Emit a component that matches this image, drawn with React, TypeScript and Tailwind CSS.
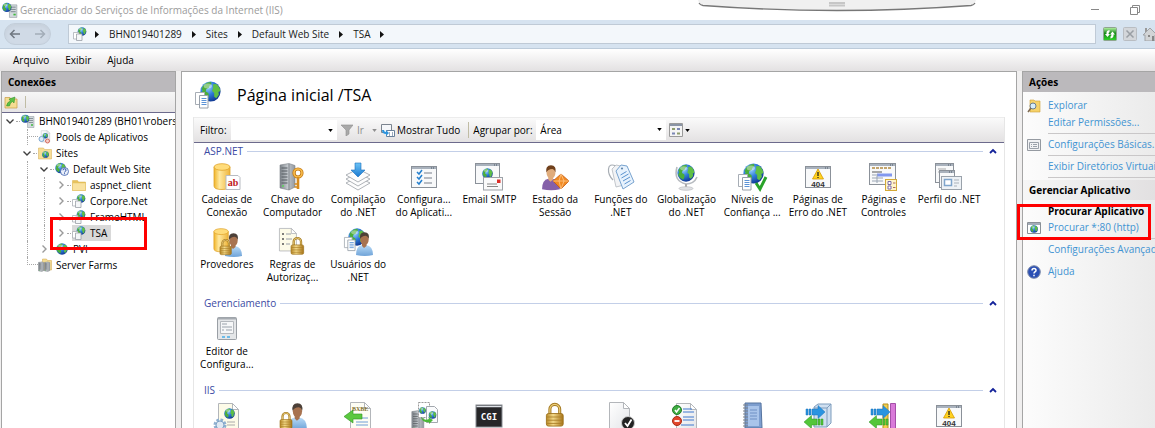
import type { ReactNode } from 'react'

type P = { x?: number; y?: number; s?: number }

const at = ({ x = 0, y = 0, s = 1 }: P) => `translate(${x} ${y}) scale(${s})`

/* shared gradients for every icon on the page */
function Gradients() {
  return (
    <svg className="absolute h-0 w-0" aria-hidden="true">
      <defs>
        <radialGradient id="sea" cx="0.35" cy="0.3" r="0.8">
          <stop offset="0" stopColor="#9fd8ff" />
          <stop offset="0.45" stopColor="#2f7ddb" />
          <stop offset="1" stopColor="#0b2c86" />
        </radialGradient>
        <linearGradient id="gold">
          <stop offset="0" stopColor="#f0b429" />
          <stop offset="0.35" stopColor="#ffe9a0" />
          <stop offset="1" stopColor="#eeb43a" />
        </linearGradient>
        <linearGradient id="brass">
          <stop offset="0" stopColor="#b98a2a" />
          <stop offset="0.4" stopColor="#f3d988" />
          <stop offset="1" stopColor="#a87418" />
        </linearGradient>
        <linearGradient id="steel">
          <stop offset="0" stopColor="#7d8389" />
          <stop offset="0.5" stopColor="#c3c8cd" />
          <stop offset="1" stopColor="#94999f" />
        </linearGradient>
        <linearGradient id="paper" x1="0" y1="0" x2="1" y2="1">
          <stop offset="0" stopColor="#ffffff" />
          <stop offset="1" stopColor="#e3e5e8" />
        </linearGradient>
        <linearGradient id="skyArrow" x1="0" y1="0" x2="0" y2="1">
          <stop offset="0" stopColor="#6cc4f7" />
          <stop offset="1" stopColor="#1a78cf" />
        </linearGradient>
        <linearGradient id="shirt" x1="0" y1="0" x2="0" y2="1">
          <stop offset="0" stopColor="#b9dbf7" />
          <stop offset="1" stopColor="#6fa3d8" />
        </linearGradient>
        <linearGradient id="refresh" x1="0" y1="0" x2="0" y2="1">
          <stop offset="0" stopColor="#b9f5a8" />
          <stop offset="0.45" stopColor="#17881a" />
          <stop offset="1" stopColor="#2fd62a" />
        </linearGradient>
      </defs>
    </svg>
  )
}

function Globe(p: P) {
  return (
    <g transform={at(p)}>
      <circle cx="10" cy="10" r="9.6" fill="url(#sea)" />
      <path d="M3 4.500Q6 1 10.500.9L11 3 9 4.500 8.500 6.500 6 7.500 5.500 10 8 11.500 8.500 14 7 17.500Q3 16 1.200 12L2.500 9 1.500 7.500Z" fill="#4cae3a" />
      <path d="M12.500 3.200L15.500 2.800Q19 5.500 19.400 9.500L17.500 10.500 18 13 15.500 16.500 13.500 15 13.500 11.500 11.500 9.500 12.500 6.500Z" fill="#5fbf45" />
      <ellipse cx="7.500" cy="4.800" rx="4" ry="2.400" fill="#fff" opacity="0.4" />
    </g>
  )
}

function Docs(p: P) {
  return (
    <g transform={at(p)}>
      <path d="M.5.5h9v12h-9z" fill="#fff" stroke="#a7adb5" />
      <path d="M4.500 3.500h8.500v12.500h-8.500z" fill="#fff" stroke="#98a0aa" />
      <path d="M6.500 6.500h5M6.500 8.500h5M6.500 10.500h5M6.500 12.500h5" stroke="#5c93d6" />
    </g>
  )
}

function Lock(p: P) {
  return (
    <g transform={at(p)}>
      <path d="M3.500 8V4.500a3.500 3.500 0 0 1 7 0V8" fill="none" stroke="#a57a22" strokeWidth="2.200" />
      <path d="M3.500 8V4.500a3.500 3.500 0 0 1 7 0V8" fill="none" stroke="#ecd07c" strokeWidth="0.8" />
      <rect x="1" y="7.500" width="12" height="9" rx="1.500" fill="url(#brass)" stroke="#9b6f17" strokeWidth="0.6" />
      <path d="M1.500 10h11M1.500 12.300h11M1.500 14.600h11" stroke="#a97e26" strokeWidth="0.6" />
    </g>
  )
}

function Person({ hair = '#4c4038', skin = '#a87350', shirt = 'url(#shirt)', ...p }: P & { hair?: string; skin?: string; shirt?: string }) {
  return (
    <g transform={at(p)}>
      <path d="M1 24q0-9 6-10h4q7 1 7 10-8 2-17 0z" fill={shirt} />
      <path d="M7 12h4.500v3L9 17l-2-2z" fill={skin} />
      <ellipse cx="9.500" cy="8.500" rx="4.200" ry="5.500" fill={skin} />
      <path d="M5 8Q4 1.500 9.500 1.200 15 1.500 13.800 8q-.8-3-3-3.300Q6.500 5 5 8z" fill={hair} />
    </g>
  )
}

function Cylinder(p: P) {
  return (
    <g transform={at(p)}>
      <path d="M1 4v19q0 3.500 8 3.500t8-3.500V4z" fill="url(#gold)" stroke="#e0a32a" strokeWidth="0.8" />
      <ellipse cx="9" cy="4" rx="8" ry="3.300" fill="#ffdc7a" stroke="#e0a32a" strokeWidth="0.8" />
    </g>
  )
}

function Sheet({ fill = 'url(#paper)', ...p }: P & { fill?: string }) {
  return (
    <g transform={at(p)}>
      <path d="M.5.5h14l6 6v20.500H.5z" fill={fill} stroke="#b3b6ba" />
      <path d="M14.500.5v6h6z" fill="#fff" stroke="#b3b6ba" />
    </g>
  )
}

function Tower(p: P) {
  return (
    <g transform={at(p)}>
      <path d="M1 2l9-1.500 6 2V24l-6 3-9-2z" fill="url(#steel)" stroke="#7b8086" strokeWidth="0.6" />
      <path d="M10 1v26" stroke="#6d7278" strokeWidth="0.7" />
      <path d="M2.500 5h6M2.500 8h6M2.500 11h6M2.500 14h6M2.500 17h6M2.500 20h6" stroke="#555a60" />
      <circle cx="4" cy="23" r="1" fill="#5cd65c" />
    </g>
  )
}

function Frame({ w = 26, h = 22, ...p }: P & { w?: number; h?: number }) {
  return (
    <g transform={at(p)}>
      <rect x="0.500" y="0.500" width={w - 1} height={h - 1} fill="#f8f9fa" stroke="#8b9199" />
      <path d={`M1 2h${w - 2}`} stroke="#a9b2bd" strokeWidth="2" />
      <path d={`M${w - 6} 2h1M${w - 4} 2h1`} stroke="#4d5866" />
    </g>
  )
}

function Arrows() {
  return (
    <g>
      <path d="M2 7h2v6H2zM5 7h2v6H5zM8 7h6V3.500l7 6.500-7 6.500V13H8z" fill="#2a94e0" stroke="#1b72ba" strokeWidth="0.5" />
      <path d="M19 17h-2v6h2zM16 17h-2v6h2zM13 17H7.500v-3.500L0 20l7.500 6.500V23H13z" fill="#54c63a" stroke="#2f9322" strokeWidth="0.5" />
    </g>
  )
}

function Error404() {
  return (
    <>
      <Frame x={1} y={3} w={26} h={22} />
      <path d="M14 6l5.500 10h-11z" fill="#ffd21f" stroke="#d69a00" strokeWidth="0.8" />
      <path d="M14 9v4M14 14v1" stroke="#222" strokeWidth="1.300" />
      <text x="14" y="23.500" textAnchor="middle" fontSize="8" fontFamily="Liberation Sans, sans-serif" fontWeight="700" fill="#333">404</text>
    </>
  )
}

const art: Record<string, ReactNode> = {
  strings: (
    <>
      <Cylinder />
      <path d="M13 12.500h12l2 2v12H13z" fill="#fff" stroke="#b8bcc2" />
      <text x="20" y="22.500" textAnchor="middle" fontSize="10" fontWeight="700" fontFamily="Liberation Serif, serif" fill="#c01818">ab</text>
    </>
  ),
  key: (
    <>
      <Tower x={1} />
      <circle cx="20" cy="10" r="4" fill="none" stroke="#c57b16" strokeWidth="3.200" />
      <circle cx="20" cy="10" r="4" fill="none" stroke="#f8bd4d" strokeWidth="1.600" />
      <path d="M20 14v12" stroke="#d68b1e" strokeWidth="2.600" />
      <path d="M20 21h-3.500M20 24h-3.500" stroke="#d68b1e" strokeWidth="1.500" />
    </>
  ),
  compile: (
    <>
      {[20, 16, 12].map((y) => (
        <path key={y} d={`M2 ${y}l12-6 12 6-12 7z`} fill="#fdfdfd" stroke="#9ba0a6" strokeWidth="0.8" />
      ))}
      <path d="M11 0h6v7h4l-7 7-7-7h4z" fill="url(#skyArrow)" stroke="#1b6fbe" strokeWidth="0.6" />
    </>
  ),
  settings: (
    <>
      <Frame x={1} y={3} w={26} h={22} />
      <path d="M7 9l2 2 3-4M7 14l2 2 3-4M7 19l2 2 3-4" fill="none" stroke="#247fce" strokeWidth="1.500" />
      <path d="M14 10h8M14 15h8M14 20h8" stroke="#777f8a" strokeWidth="1.200" />
    </>
  ),
  smtp: (
    <>
      <Frame x={0} y={0} w={25} h={21} />
      <Globe x={7} y={5} s={0.55} />
      <rect x="8.500" y="14.500" width="19" height="12.500" fill="#fafafa" stroke="#9da2a8" />
      <rect x="22" y="16.500" width="3.500" height="3.500" fill="#dc2d28" />
      <path d="M12 21h10M12 23.500h11" stroke="#888" />
    </>
  ),
  session: (
    <>
      <Person x={0} y={1} hair="#70401c" skin="#e0ac7c" shirt="#8560a8" s={1.050} />
      <path d="M20 11l8 7-8 8-8-8z" fill="#f18a23" stroke="#c6590d" strokeWidth="0.8" />
      <path d="M20 11l-2 7 2 8M12 18h16M20 11l3 7-3 8" fill="none" stroke="#ffd09a" strokeWidth="0.7" />
    </>
  ),
  functions: (
    <>
      <path d="M9 3Q2 0 1.500 6T6 17" fill="none" stroke="#a7adb4" strokeWidth="1.200" />
      <path d="M5 6l4-4 5 1 3 19-8 2z" fill="#f2f3f5" stroke="#b4b9bf" strokeWidth="0.8" />
      <path d="M9 8l5-6 6 1 7 16-11 7z" fill="#e7f2fd" stroke="#78a3cf" strokeWidth="1" />
      <path d="M13.500 12l6-3.500M14.500 15l7-4M16 18l7-4M17.500 21l6-3.500" stroke="#5b93cf" />
      <circle cx="15" cy="5.500" r="1.100" fill="#6287ab" />
    </>
  ),
  globe: (
    <>
      <path d="M5 4Q1 18 14 21q8 0 11-7" fill="none" stroke="#b7bbc0" strokeWidth="1.600" />
      <Globe x={5} y={1} s={0.9} />
      <path d="M14 21v4" stroke="#aaa" strokeWidth="2" />
      <ellipse cx="14" cy="25.500" rx="7" ry="1.800" fill="#dfe1e4" stroke="#b1b4b8" strokeWidth="0.6" />
    </>
  ),
  trust: (
    <>
      <Globe x={5} y={0} s={1.050} />
      <Docs x={0} y={11} />
      <path d="M18 20l4 6 6-12" fill="none" stroke="#29a329" strokeWidth="3" />
    </>
  ),
  error: <Error404 />,
  pages: (
    <>
      <Frame x={0} y={0} w={27} h={22} />
      <path d="M3 5h20" stroke="#c3a56e" strokeWidth="2" strokeDasharray="3 1" />
      <path d="M3 9h10" stroke="#555" />
      <path d="M8 12h15" stroke="#8197ee" strokeWidth="3" />
      <path d="M8 11v9M3 12h4M3 15h11M3 18h11" stroke="#9aa5b3" />
      <rect x="16.500" y="16.500" width="11" height="11" fill="#fff5c9" stroke="#d3a936" />
      <path d="M19 18.500h3v3h-3zM19 23h3v3h-3z" fill="#fff" stroke="#7a6aa8" />
      <path d="M24 20h2.500M24 24.500h2.500" stroke="#a66" />
    </>
  ),
  profile: (
    <>
      <Frame x={0} y={0} w={19} h={20} />
      <path d="M3 6h8M3 9h4" stroke="#aaa" />
      <Frame x={4} y={7} w={16} h={18} />
      <rect x="6.500" y="13.500" width="20" height="13" fill="#eef2f6" stroke="#9aa2ab" />
      <rect x="9.500" y="16.500" width="7" height="6" fill="#fff" stroke="#7fa5cc" strokeWidth="1.500" />
      <path d="M19 17h5M19 20h5M19 23h3" stroke="#aab2bb" />
    </>
  ),
  providers: (
    <>
      <Cylinder s={0.9} />
      <Person x={11} y={4} />
      <Lock x={6} y={11} s={0.95} />
    </>
  ),
  rules: (
    <>
      <Sheet x={1} y={0} s={0.85} fill="#fdfbe8" />
      <path d="M4 6h2M4 11h2M4 16h2" stroke="#555" strokeWidth="1.500" />
      <path d="M8 6h5M8 11h6M8 16h4" stroke="#9aa0a8" />
      <Lock x={12} y={9} s={1.050} />
    </>
  ),
  users: (
    <>
      <Globe x={4} y={0} s={0.9} />
      <Docs x={0} y={9} s={0.85} />
      <Person x={11} y={3} />
    </>
  ),
  editor: (
    <>
      <rect x="4.500" y="2.500" width="19" height="22" rx="1" fill="#e4e6e8" stroke="#9a9fa5" />
      <path d="M5 3.500h18" stroke="#a6abb1" strokeWidth="2" />
      <path d="M7.500 6.500h13v12h-13z" fill="#f6f7f8" stroke="#b4b8bd" />
      <path d="M9 9h5M9 12h10M9 15h2M13 15h6" stroke="#9aa2ab" />
      <path d="M9 22h3M14 22h3" stroke="#6cbbe8" strokeWidth="2" />
    </>
  ),
  handlers: (
    <>
      <Sheet x={5} y={1} fill="#fdfbe8" />
      <Globe x={11} y={6} s={0.55} />
      <path d="M14 20h8M14 23h8" stroke="#aaa" />
      <circle cx="7" cy="23" r="5" fill="#dfe9f3" stroke="#8fb0d0" strokeWidth="3" strokeDasharray="2.500 1.400" />
      <circle cx="7" cy="23" r="4" fill="#dfe9f3" stroke="#7fa3c6" />
    </>
  ),
  auth: (
    <>
      <Person x={9} y={0} s={1.100} />
      <Lock x={1} y={10} />
    </>
  ),
  output: (
    <>
      <Sheet x={6} y={0} fill="#fdfdf4" />
      <text x="8" y="8.500" fontSize="6" fontFamily="Liberation Serif, serif" fontWeight="700" fill="#806d2c">BXBE</text>
      <path d="M12 16h12M12 20h12M12 23h12" stroke="#6f9ed6" />
      <path d="M9 8v4h9v5H9v4l-9-6.500z" fill="#5bc83f" stroke="#2f9322" strokeWidth="0.600" />
    </>
  ),
  cache: (
    <>
      <Tower x={1} y={8} s={0.8} />
      <path d="M8.500.5h11v15h-11z" fill="#fff" stroke="#999" strokeDasharray="2 1" />
      <Globe x={9} y={5} s={0.35} />
      <path d="M16.500 4.500h8l3 3v13h-11z" fill="#fafbfc" stroke="#a3a8ae" />
      <Globe x={18.500} y={9} s={0.4} />
      <path d="M11 15q3 4 8 2l-1-2 5 3-4 4v-2q-7 1-8-5z" fill="#4cb838" />
    </>
  ),
  cgi: (
    <>
      <rect x="1" y="3" width="26" height="22" fill="#262628" stroke="#888c92" />
      <path d="M1.500 4.500h25" stroke="#dfe3e8" strokeWidth="1.500" />
      <text x="14" y="18" textAnchor="middle" fontSize="9" fontWeight="700" fontFamily="DejaVu Sans Mono, monospace" fill="#fff">CGI</text>
    </>
  ),
  ssl: <Lock x={4} y={1} s={1.400} />,
  document: (
    <>
      <Sheet x={2} y={0} />
      <circle cx="21" cy="21" r="6.500" fill="#222" stroke="#ccc" />
      <path d="M18 21l2.500 3 4-6.500" fill="none" stroke="#fff" strokeWidth="1.800" />
    </>
  ),
  filter: (
    <>
      <Sheet x={4} y={1} />
      <path d="M11 7h9M11 10h11M11 15h11M11 18h11M9 23h13" stroke="#3f78cf" />
      <circle cx="5" cy="8" r="4.500" fill="#3fae42" stroke="#257a2a" />
      <path d="M3 8l1.500 2L7.500 6" fill="none" stroke="#fff" strokeWidth="1.500" />
      <circle cx="5" cy="19" r="4.500" fill="#e2462b" stroke="#a92c17" />
      <path d="M2.500 19h5" stroke="#fff" strokeWidth="1.800" />
    </>
  ),
  logs: (
    <>
      <path d="M7 1h16l1 25H7z" fill="#7d9ecf" stroke="#56749f" />
      <path d="M10 4h11v20H10z" fill="#a9c4ea" />
      <path d="M12 8h7M12 11h7M12 14h7M12 17h7" stroke="#6f90c4" />
      <path d="M5 3h5M5 6h5M5 9h5M5 12h5M5 15h5M5 18h5M5 21h5M5 24h5" stroke="#7a8088" />
    </>
  ),
  mime: (
    <>
      <path d="M10 5l4-3h13v19l-4 4H10z" fill="#cfdff0" stroke="#7f9dbd" />
      <path d="M23 6l4-4M10 6h13v19" fill="none" stroke="#7f9dbd" />
      <Arrows />
    </>
  ),
  modules: (
    <>
      <path d="M14 2h5v25h-5z" fill="#f2cf4d" stroke="#b58f1e" />
      <path d="M21.500 1.500h5v26h-5z" fill="#d97ad9" stroke="#a44fa8" />
      <Arrows />
    </>
  ),
}

function FeatureIcon({ name }: { name: string }) {
  return (
    <svg viewBox="0 0 28 28" className="h-7 w-7 shrink-0 overflow-visible" aria-hidden="true">
      {art[name]}
    </svg>
  )
}

const small: Record<string, ReactNode> = {
  server: (
    <>
      <path d="M13 5h13v22H13z" fill="#d3dade" stroke="#8b949b" />
      <path d="M15 9h9M15 13h9M15 17h9" stroke="#6f7b84" strokeWidth="1.500" />
      <path d="M20 22h4" stroke="#3fb83f" strokeWidth="3" />
      <Globe x={0} y={1} s={0.85} />
    </>
  ),
  pools: (
    <>
      <Sheet x={6} y={1} s={0.85} />
      <Globe x={9} y={6} s={0.55} />
      <circle cx="7" cy="18" r="5" fill="#dcebf8" stroke="#7ba6cf" strokeWidth="2" />
      <circle cx="19" cy="22" r="4" fill="#f7cfc8" stroke="#d5695c" strokeWidth="2" />
    </>
  ),
  sites: (
    <>
      <path d="M1 4h10l2 3h14v19H1z" fill="#f7dd95" stroke="#d3ab52" />
      <Globe x={8} y={10} s={0.7} />
    </>
  ),
  site: (
    <>
      <Globe x={0} y={1} s={1.100} />
      <circle cx="19" cy="19" r="8" fill="#e9effa" stroke="#3558a8" strokeWidth="1.500" />
      <path d="M16 16.500q0-3 3-3t3 3q0 1.500-2 2.500-1 .6-1 2M19 22.500v2" fill="none" stroke="#2d50a5" strokeWidth="2" />
    </>
  ),
  folder: (
    <>
      <path d="M1 5h10l2 3h14v17H1z" fill="#e8c25c" stroke="#d8b04c" />
      <path d="M1 10h26v15H1z" fill="#f9e2a0" stroke="#e3c162" />
    </>
  ),
  app: (
    <>
      <Globe x={9} y={0} s={0.9} />
      <path d="M1 11h11v13H1z" fill="#fff" stroke="#a6abb2" strokeWidth="1.500" />
      <path d="M7 14h11v13H7z" fill="#f4f6f8" stroke="#959ba3" strokeWidth="1.500" />
    </>
  ),
  world: <Globe x={2} y={2} s={1.200} />,
  farm: (
    <>
      <path d="M9 2h8l2 3h8v19H9z" fill="#f5dc92" stroke="#d0a548" />
      <Tower x={0} y={7} s={0.75} />
      <Tower x={12} y={7} s={0.75} />
    </>
  ),
}

function SmallIcon({ name, className = 'h-3.5 w-3.5' }: { name: string; className?: string }) {
  return (
    <svg viewBox="0 0 28 28" className={`${className} shrink-0`} aria-hidden="true">
      {small[name]}
    </svg>
  )
}

type Node = { label: string; icon: string; level: number; state: 'open' | 'closed' | 'leaf'; selected?: boolean }

const tree: Node[] = [
  { label: 'BHN019401289 (BH01\\roberso', icon: 'server', level: 0, state: 'open' },
  { label: 'Pools de Aplicativos', icon: 'pools', level: 1, state: 'leaf' },
  { label: 'Sites', icon: 'sites', level: 1, state: 'open' },
  { label: 'Default Web Site', icon: 'site', level: 2, state: 'open' },
  { label: 'aspnet_client', icon: 'folder', level: 3, state: 'closed' },
  { label: 'Corpore.Net', icon: 'app', level: 3, state: 'closed' },
  { label: 'FrameHTML', icon: 'app', level: 3, state: 'closed' },
  { label: 'TSA', icon: 'app', level: 3, state: 'closed', selected: true },
  { label: 'PVI', icon: 'world', level: 2, state: 'closed' },
  { label: 'Server Farms', icon: 'farm', level: 1, state: 'leaf' },
]

const sections = [
  {
    title: 'ASP.NET',
    items: [
      ['strings', 'Cadeias de', 'Conexão'],
      ['key', 'Chave do', 'Computador'],
      ['compile', 'Compilação', 'do .NET'],
      ['settings', 'Configura...', 'do Aplicati...'],
      ['smtp', 'Email SMTP', ''],
      ['session', 'Estado da', 'Sessão'],
      ['functions', 'Funções do', '.NET'],
      ['globe', 'Globalização', 'do .NET'],
      ['trust', 'Níveis de', 'Confiança ...'],
      ['error', 'Páginas de', 'Erro do .NET'],
      ['pages', 'Páginas e', 'Controles'],
      ['profile', 'Perfil do .NET', ''],
      ['providers', 'Provedores', ''],
      ['rules', 'Regras de', 'Autorizaç...'],
      ['users', 'Usuários do', '.NET'],
    ],
  },
  { title: 'Gerenciamento', items: [['editor', 'Editor de', 'Configura...']] },
  {
    title: 'IIS',
    items: ['handlers', 'auth', 'output', 'cache', 'cgi', 'ssl', 'document', 'filter', 'logs', 'mime', 'modules', 'error'].map((i) => [i, '', '']),
  },
]

function Triangle({ className = '' }: { className?: string }) {
  return (
    <svg viewBox="0 0 6 4" className={`h-[3px] w-[5px] shrink-0 ${className}`} aria-hidden="true">
      <path d="M0 0h6L3 4z" fill="currentColor" />
    </svg>
  )
}

function CrumbArrow() {
  return (
    <svg viewBox="0 0 4 7" className="h-[7px] w-1 shrink-0" aria-hidden="true">
      <path d="M0 0l4 3.500L0 7z" fill="#111" />
    </svg>
  )
}

function TitleBar() {
  return (
    <header className="relative flex h-5 shrink-0 items-center bg-white pl-0.5">
      <SmallIcon name="server" className="h-4 w-4" />
      <h1 className="ml-[2px] flex-1 whitespace-nowrap text-[10px] text-[#9b9b9b]">Gerenciador do Serviços de Informações da Internet (IIS)</h1>
      <button aria-label="Minimizar" className="flex h-5 w-10 justify-center pt-[9px]">
        <span className="h-px w-2 bg-[#888]" />
      </button>
      <button aria-label="Restaurar" className="flex h-5 w-10 items-center justify-center">
        <svg viewBox="0 0 10 10" className="h-2.5 w-2.5" fill="none" stroke="#888">
          <path d="M.5 2.500h7v7h-7zM2.500 2.500v-2h7v7h-2" />
        </svg>
      </button>
      <svg viewBox="0 0 278 12" className="absolute left-[698px] top-0 h-3 w-[278px]" aria-hidden="true">
        <path d="M0 0Q1 5 5 5.500 139 15.500 273 5.500 277 5 278 0z" fill="#f0f0f0" />
        <path d="M1 3Q2 5 5 5.500 139 15.500 273 5.500 276 5 277 3" fill="none" stroke="#777" strokeWidth="1.300" />
        <path d="M131 3h16M131 5.500h16" stroke="#c6c6c6" strokeWidth="2" />
      </svg>
    </header>
  )
}

function AddressBar() {
  return (
    <nav className="flex h-[29px] shrink-0 items-center border-b border-[#bccbda] bg-[#d6e3f0]">
      <div className="w-[68px] shrink-0 pl-1">
        <div className="flex h-[22px] w-[47px] items-center justify-between rounded-full border border-[#c3ceda] bg-[#d0dae6] px-1 shadow-inner">
          <button aria-label="Voltar">
            <svg viewBox="0 0 12 10" className="h-2.5 w-3" fill="none" stroke="#6f7780" strokeWidth="1.500">
              <path d="M11 5H1.500M5.500 1l-4 4 4 4" />
            </svg>
          </button>
          <button aria-label="Avançar">
            <svg viewBox="0 0 12 10" className="h-2.5 w-3" fill="none" stroke="#a3adb8" strokeWidth="1.500">
              <path d="M1 5h9.500M6.500 1l4 4-4 4" />
            </svg>
          </button>
        </div>
      </div>
      <ol className="flex h-5 flex-1 items-center border border-[#bfcad6] bg-[#f3f7fb] pl-1 text-[#1a1a1a]">
        <li className="flex items-center gap-2">
          <SmallIcon name="app" />
          <CrumbArrow />
        </li>
        {['BHN019401289', 'Sites', 'Default Web Site', 'TSA'].map((c) => (
          <li key={c} className="flex items-center">
            <button className="mx-2.5">{c}</button>
            <CrumbArrow />
          </li>
        ))}
      </ol>
      <div className="flex w-[59px] shrink-0 gap-1.5 overflow-hidden pl-[7px]">
        <button aria-label="Atualizar" className="shrink-0">
          <svg viewBox="0 0 14 14" className="h-3.5 w-3.5">
            <rect x="0.500" y="0.500" width="13" height="13" rx="1" fill="url(#refresh)" stroke="#8fa58f" />
            <path d="M6.500 3Q3 3.500 3.500 7H2l2.500 3L7 7H5.500q0-1.500 1-2zM7.500 11.500Q11 11 10.500 7.500H12L9.500 4.500 7 7.500h1.500q0 1.500-1 2z" fill="#fff" />
          </svg>
        </button>
        <button aria-label="Parar" className="shrink-0">
          <svg viewBox="0 0 14 14" className="h-3.5 w-3.5">
            <rect x="0.500" y="0.500" width="13" height="13" rx="1" fill="#d3d6da" stroke="#b9bdc2" />
            <path d="M3.500 3.500l7 7M10.500 3.500l-7 7" stroke="#999ea4" strokeWidth="1.500" />
          </svg>
        </button>
        <button aria-label="Página inicial" className="shrink-0">
          <svg viewBox="0 0 14 14" className="h-3.5 w-3.5">
            <path d="M2 1h2v4H2z" fill="#999" />
            <path d="M0 8l7-7 7 7h-2v6H2V8z" fill="#d2d4d6" stroke="#a1a4a8" />
            <path d="M5 8h2v2H5zM9 9h2v5H9z" fill="#888" />
          </svg>
        </button>
      </div>
    </nav>
  )
}

function Connections() {
  return (
    <aside className="ml-px flex w-[175px] shrink-0 flex-col overflow-hidden border border-b-0 border-[#a5a5a5] bg-white">
      <h2 className="h-5 shrink-0 bg-[#bbb9bc] pl-1.5 font-bold leading-5">Conexões</h2>
      <div className="flex h-[21px] shrink-0 items-center border-b border-[#6c6a8c] bg-linear-to-b from-[#f6f6f6] to-[#e6e4e5] pl-0.5">
        <button aria-label="Subir um nível">
          <svg viewBox="0 0 28 28" className="h-3.5 w-3.5">
            <path d="M2 5h10l2 3h12v18H2z" fill="#f5dc92" stroke="#c9a04a" strokeWidth="1.500" />
            <path d="M5 22q1-8 8-10l-3-4 12-4-2 12-3-3q-5 2-6 9z" fill="#5cc046" stroke="#2e8a22" />
          </svg>
        </button>
        <span className="ml-[7px] h-3 w-px bg-[#c0bca4]" />
      </div>
      <ul>
        {tree.map((n) => (
          <li key={n.label} className="flex h-4 items-center whitespace-nowrap pl-0.5">
            {Array.from({ length: n.level }, (_, i) => (
              <span key={i} className="flex h-4 w-[17px] shrink-0 pl-1.5">
                {i > 0 && <span className="border-l border-dotted border-[#a8a8a8]" />}
              </span>
            ))}
            {n.state === 'leaf' ? (
              <span className="flex h-4 w-[17px] shrink-0 flex-col pl-1.5">
                <span className="h-2 border-b border-l border-dotted border-[#a8a8a8]" />
                <span className={`h-2 ${n.label === 'Server Farms' ? '' : 'border-l border-dotted border-[#a8a8a8]'}`} />
              </span>
            ) : (
              <button aria-label={n.label} className="flex w-[17px] shrink-0 items-center">
                <svg viewBox="0 0 12 12" className="h-3 w-3" fill="none" stroke={n.state === 'open' ? '#404040' : '#9a9a9a'} strokeWidth="1.400">
                  <path d={n.state === 'open' ? 'M2.500 4.500L6 8l3.500-3.500' : 'M4.500 2.500L8 6 4.500 9.500'} />
                </svg>
                <span className="w-1 border-b border-dotted border-[#a8a8a8]" />
              </button>
            )}
            <span className={`flex h-4 items-center ${n.selected ? 'bg-[#d9d9d9] pr-1' : ''}`}>
              <SmallIcon name={n.icon} />
              <span className="ml-1">{n.label}</span>
            </span>
          </li>
        ))}
      </ul>
    </aside>
  )
}

function FilterBar() {
  return (
    <div className="flex h-[26px] shrink-0 items-center overflow-hidden whitespace-nowrap border-b border-t border-b-[#6c6a8c] border-t-[#ececec] bg-linear-to-b from-[#fafafa] to-[#e3e1e2]">
      <label htmlFor="filter" className="w-[37px] shrink-0 pl-1.5">Filtro:</label>
      <div className="flex h-5 w-[106px] shrink-0 items-center bg-white pr-1">
        <input id="filter" className="h-5 w-[97px] px-1 outline-none" />
        <Triangle />
      </div>
      <button className="ml-1 flex items-center text-[#8e8e8e]">
        <svg viewBox="0 0 12 12" className="mr-1 h-3 w-3">
          <path d="M0 1h12L8 6v4l-3 2V6z" fill="#a9a9a9" stroke="#8f8f8f" strokeWidth="0.600" />
        </svg>
        Ir
        <Triangle className="ml-2" />
      </button>
      <button className="ml-1 flex items-center">
        <svg viewBox="0 0 14 14" className="mr-0.5 h-3.5 w-3.5">
          <path d="M.5 1.500h10v8H.5z" fill="#f5f7fa" stroke="#7b848f" />
          <path d="M5.500 7.500h8v6h-8z" fill="#fff" stroke="#69809a" />
          <path d="M8 10h1M11 10h1M8 12h1M11 12h1" stroke="#37577c" />
          <path d="M1 7q0 4 4 4v2l3-3-3-3v2Q3 9 3 7z" fill="#2c93dc" />
        </svg>
        Mostrar Tudo
      </button>
      <span className="ml-2 h-4 w-px shrink-0 bg-[#c0bca4]" />
      <label htmlFor="group" className="ml-1 w-[63px] shrink-0">Agrupar por:</label>
      <div className="relative h-5 w-[130px] shrink-0 bg-white">
        <select id="group" className="h-5 w-full appearance-none pl-1 outline-none">
          <option>Área</option>
        </select>
        <Triangle className="pointer-events-none absolute right-1 top-2" />
      </div>
      <button aria-label="Exibição" className="ml-[3px] flex items-center gap-0.5">
        <svg viewBox="0 0 14 14" className="h-3.5 w-3.5">
          <path d="M.5.5h13v13H.5z" fill="#f4f4f4" stroke="#9a9a9a" />
          <path d="M1 2h12" stroke="#8a94a5" strokeWidth="2" />
          <path d="M3 5h3v2H3zM8 9.500h3v2H8z" fill="#8d9c6c" />
          <path d="M3 9.500h3v2H3zM8 5h3v2H8z" fill="#7a86b4" />
        </svg>
        <Triangle />
      </button>
    </div>
  )
}

function Main() {
  return (
    <main className="ml-[5px] flex min-w-0 flex-1 flex-col overflow-hidden border border-b-0 border-[#a5a5a5] bg-white pl-[11px] pr-[11px]">
      <div className="flex h-[45px] shrink-0 items-center">
        <svg viewBox="0 0 28 28" className="ml-0.5 h-7 w-7 shrink-0" aria-hidden="true">
          <Globe x={5} y={0} s={1.050} />
          <Docs x={0} y={11} />
        </svg>
        <h2 className="ml-3.5 text-base leading-5">Página inicial /TSA</h2>
      </div>
      <div className="flex min-h-0 flex-1 flex-col border-x border-[#e6e6e6]">
        <FilterBar />
        {sections.map((s) => (
          <section key={s.title} className="mb-0.5 shrink-0">
            <div className="flex h-4 items-center pl-2.5 pr-[7px]">
              <h3 className="text-[#3b4aa3]">{s.title}</h3>
              <span className="ml-1 h-px flex-1 bg-[#c3cfe8]" />
              <button aria-label={`Recolher ${s.title}`} className="ml-1.5">
                <svg viewBox="0 0 8 6" className="h-1.5 w-2" fill="none" stroke="#14239a" strokeWidth="1.800">
                  <path d="M1 5l3-3 3 3" />
                </svg>
              </button>
            </div>
            <ul className="mt-1 grid grid-cols-12 pr-[22px]">
              {s.items.map(([icon, a, b], i) => (
                <li key={i} className="flex h-[65px] flex-col items-center whitespace-nowrap leading-[13px]">
                  <FeatureIcon name={icon} />
                  <span className="mt-0.5">{a}</span>
                  <span>{b}</span>
                </li>
              ))}
            </ul>
          </section>
        ))}
      </div>
    </main>
  )
}

function Action({ icon, children }: { icon?: ReactNode; children: ReactNode }) {
  return (
    <a href="#" className="flex h-[17px] items-center text-[#3f93d2]">
      <svg viewBox="0 0 14 14" className="ml-1 mr-[7px] h-3.5 w-3.5 shrink-0" aria-hidden="true">{icon}</svg>
      {children}
    </a>
  )
}

function Rule() {
  return <hr className="my-0.5 ml-[25px] border-[#c9c7c8]" />
}

function Actions() {
  return (
    <aside className="ml-[5px] w-[133px] shrink-0 overflow-hidden whitespace-nowrap border-l border-t border-[#a5a5a5] bg-linear-to-r from-[#fcfcfc] to-[#ebebeb]">
      <h2 className="mb-[5px] h-5 bg-[#bbb9bc] pl-1.5 font-bold leading-5">Ações</h2>
      <Action
        icon={
          <>
            <path d="M3 1h4l1 1h5v11H3z" fill="#f6d26a" stroke="#cf9f35" strokeWidth="0.600" />
            <circle cx="6" cy="7" r="3" fill="#d5ecfa" stroke="#6a7d90" />
            <path d="M4 9l-3 4" stroke="#7d6a52" strokeWidth="1.500" />
          </>
        }
      >
        Explorar
      </Action>
      <Action>Editar Permissões...</Action>
      <Rule />
      <Action
        icon={
          <>
            <path d="M.5 1.500h13v11H.5z" fill="#f1f2f4" stroke="#959aa1" />
            <path d="M2.500 4.500h9v6h-9zM4 6.500h1M6 6.500h4M4 8.500h1M6 8.500h4" fill="none" stroke="#9aa1aa" />
          </>
        }
      >
        Configurações Básicas...
      </Action>
      <Rule />
      <Action>Exibir Diretórios Virtuais</Action>
      <Rule />
      <h3 className="mb-[3px] h-5 bg-linear-to-r from-[#f6f6f6] to-[#e2e0e1] pl-1.5 font-bold leading-5">Gerenciar Aplicativo</h3>
      <h4 className="h-4 pl-[25px] font-bold leading-4">Procurar Aplicativo</h4>
      <Action
        icon={
          <>
            <path d="M.5 1.500h13v11H.5z" fill="#fff" stroke="#8a9097" />
            <path d="M1 3h12" stroke="#a3acb8" strokeWidth="2" />
            <Globe x={3} y={4} s={0.4} />
          </>
        }
      >
        Procurar *:80 (http)
      </Action>
      <Rule />
      <Action>Configurações Avançadas...</Action>
      <div className="mt-[5px]">
        <Action
          icon={
            <>
              <circle cx="7" cy="7" r="6.300" fill="#2b50b4" stroke="#7d8aa8" />
              <path d="M5 5.500Q5 3.500 7 3.500t2 2Q9 6.500 7.800 7 7 7.500 7 8.500M7 9.700v1.500" fill="none" stroke="#fff" strokeWidth="1.500" />
            </>
          }
        >
          Ajuda
        </Action>
      </div>
    </aside>
  )
}

export default function App() {
  return (
    <div className="relative flex h-screen flex-col overflow-hidden bg-[#f0efef] font-['Open_Sans',sans-serif] text-[10px] text-black">
      <Gradients />
      <TitleBar />
      <AddressBar />
      <div className="flex h-[22px] shrink-0 items-center gap-4 bg-linear-to-b from-white to-[#e3e1e2] pl-[13px]">
        <button>Arquivo</button>
        <button>Exibir</button>
        <button>Ajuda</button>
      </div>
      <div className="flex min-h-0 flex-1">
        <Connections />
        <Main />
        <Actions />
      </div>
      {/* highlight marks */}
      <div className="pointer-events-none absolute left-[50px] top-[217px] h-[33px] w-[97px] border-[3px] border-[#f00]" />
      <div className="pointer-events-none absolute right-1 top-[204px] h-9 w-[134px] border-[3px] border-[#f00]" />
    </div>
  )
}
